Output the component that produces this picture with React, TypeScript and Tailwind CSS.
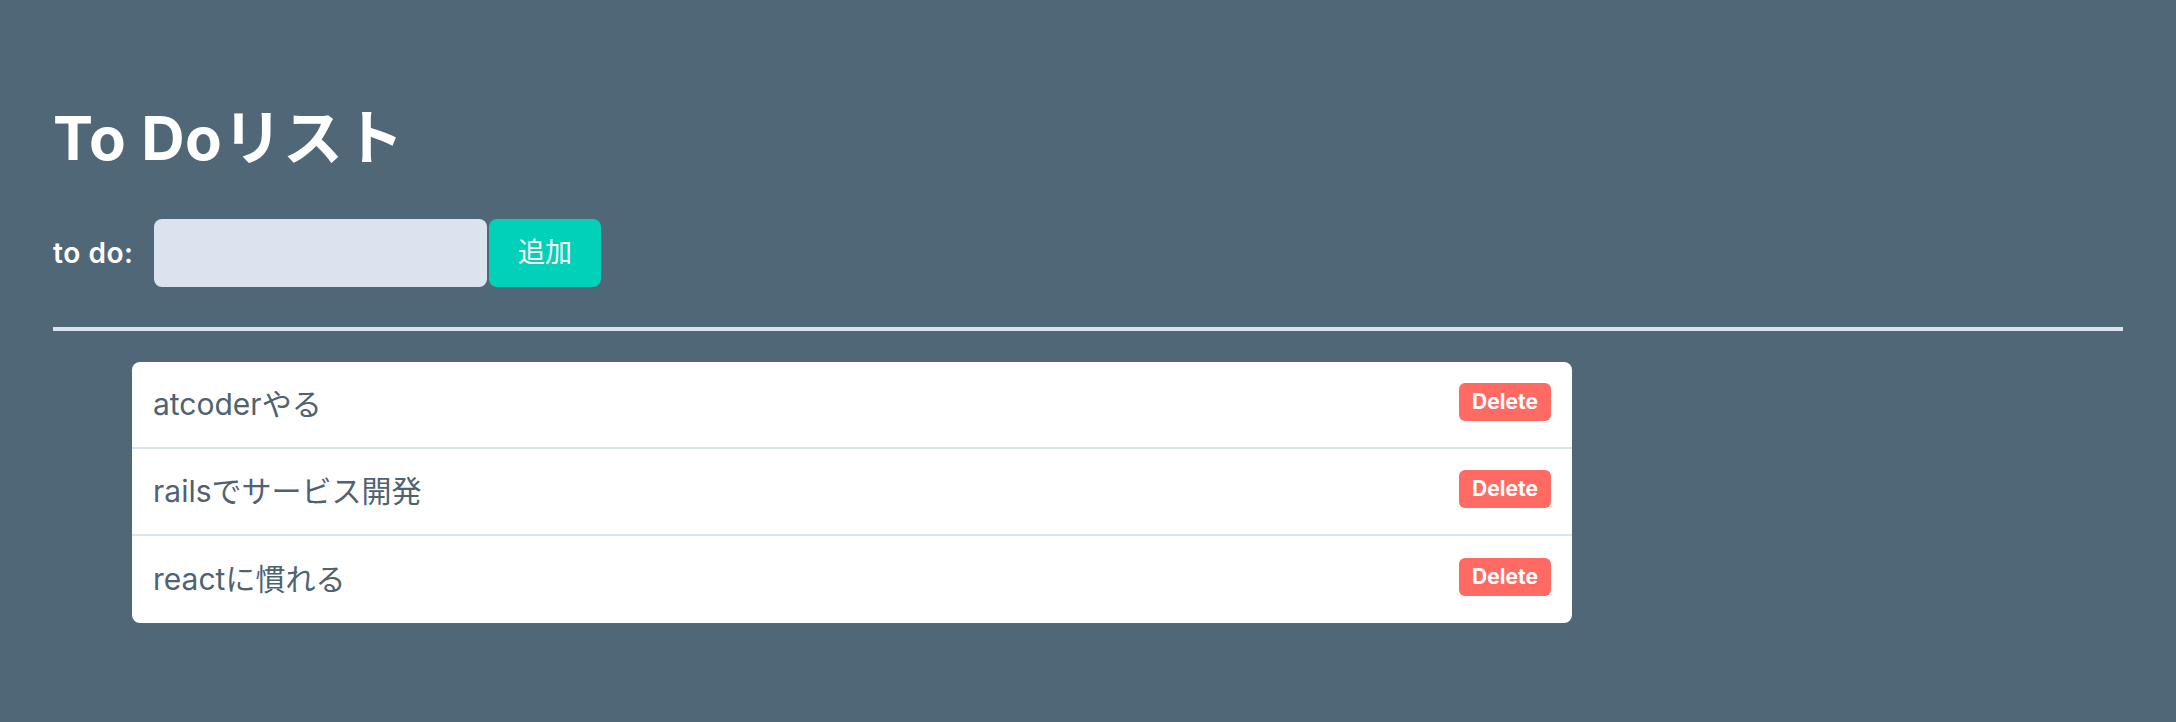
import React, { useState } from 'react';

type Todo = { id: number; text: string };

const initialTodos: Todo[] = [
  { id: 1, text: 'atcoderやる' },
  { id: 2, text: 'railsでサービス開発' },
  { id: 3, text: 'reactに慣れる' },
];

const font = 'font-["Inter","Noto_Sans_CJK_JP",sans-serif]';

const App: React.FC = () => {
  const [todos, setTodos] = useState<Todo[]>(initialTodos);
  const [input, setInput] = useState('');

  const addTodo = () => {
    if (!input.trim()) return;
    setTodos([...todos, { id: Date.now(), text: input }]);
    setInput('');
  };

  const deleteTodo = (id: number) => {
    setTodos(todos.filter((t) => t.id !== id));
  };

  return (
    <div className={`min-h-screen bg-[#506778] px-[53px] pt-[108px] pb-[60px] ${font}`}>
      <h1 className="text-[60px] font-bold leading-none tracking-[0.01em] text-white h-[60px]">To Doリスト</h1>

      <div className="mt-[51px] flex items-center h-[68px]">
        <label className="w-[101px] shrink-0 text-[28px] font-semibold tracking-[0.02em] text-white">to do:</label>
        <input
          value={input}
          onChange={(e) => setInput(e.target.value)}
          className="w-[333px] h-[68px] rounded-lg bg-[#dbe4ee] px-4 text-[27px] text-[#4f6272] outline-none"
        />
        <button
          onClick={addTodo}
          className="ml-[2px] w-[112px] h-[68px] rounded-lg bg-[#00d1b8] text-[27px] text-white"
        >
          追加
        </button>
      </div>

      <hr className="mt-[40px] border-0 h-[4px] bg-[#dbe4ee]" />

      <ul className="mt-[31px] ml-[79px] w-[1440px] rounded-lg bg-white">
        {todos.map((todo, i) => (
          <li
            key={todo.id}
            className={`flex items-center justify-between h-[87px] px-[21px] ${
              i < todos.length - 1 ? 'border-b-2 border-[#dbe4ee]' : ''
            }`}
          >
            <span className="text-[30px] text-[#4f6272]">{todo.text}</span>
            <button
              onClick={() => deleteTodo(todo.id)}
              className="mb-[6px] w-[92px] h-[38px] rounded-md bg-[#ff6b63] text-[21px] font-bold text-white"
            >
              Delete
            </button>
          </li>
        ))}
      </ul>
    </div>
  );
};

export default App;
